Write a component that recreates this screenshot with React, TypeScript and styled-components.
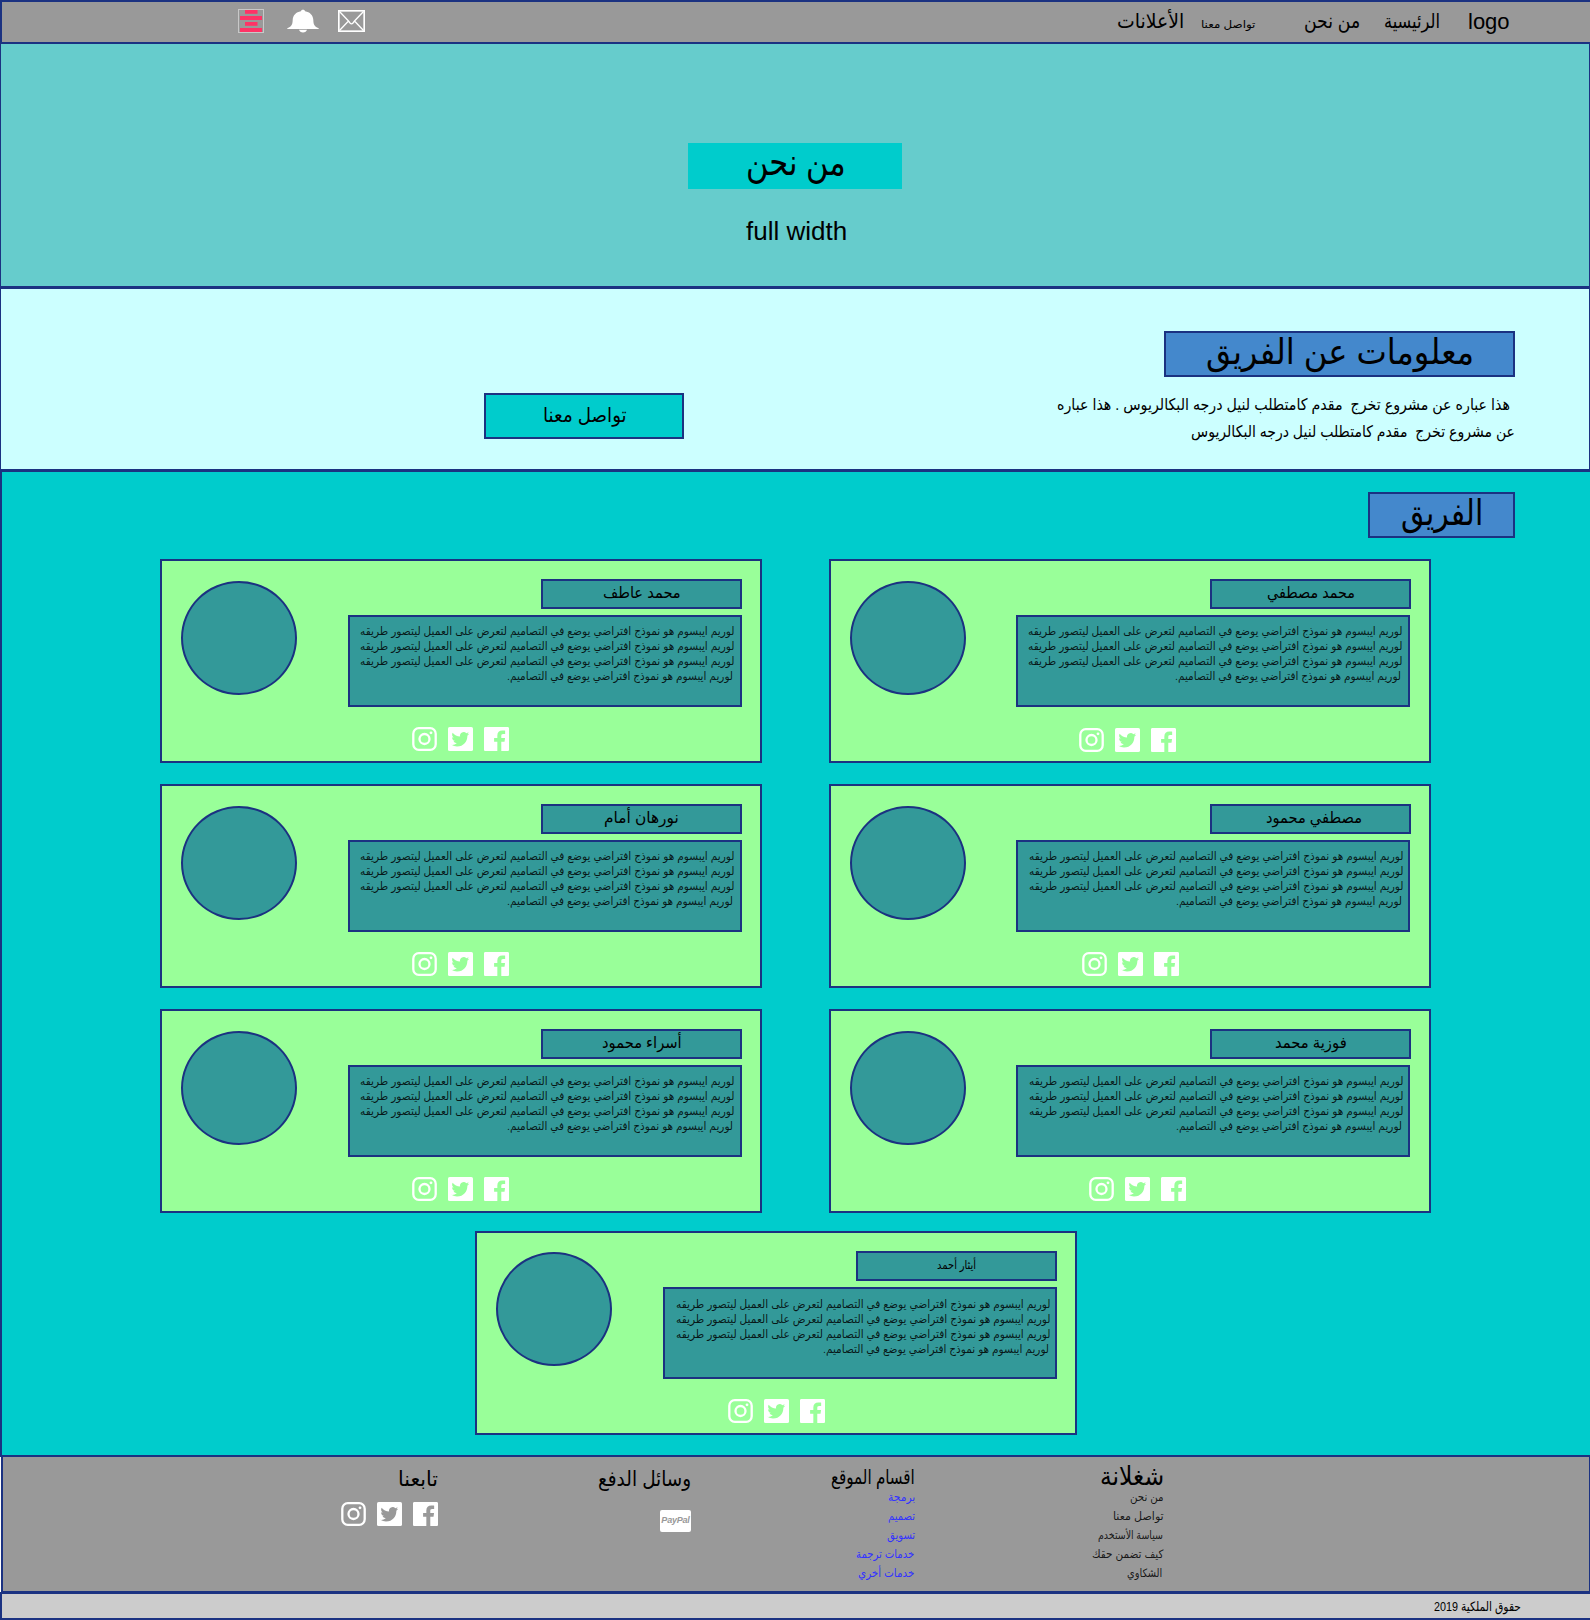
import React, { useLayoutEffect, useRef, useState } from "react";
import styled, { createGlobalStyle } from "styled-components";

const c = {
  line: "#1b3281",
  gray: "#999999",
  hero: "#66cccc",
  pale: "#ccffff",
  aqua: "#00cccc",
  green: "#99ff99",
  teal: "#339999",
  blue: "#4488cc",
  link: "#3333ff",
  soft: "rgba(0, 0, 0, 0.85)",
};

const GlobalStyle = createGlobalStyle`
  * { box-sizing: border-box; }
  body {
    margin: 0;
    font-family: "Liberation Sans", "DejaVu Sans", sans-serif;
    color: #000;
  }
`;

/* ---------- text fitted to a column width ---------- */

interface LineProps {
  $w: number;
  $fs: number;
  $lh: number;
  $base?: number;
  $ml?: number;
  $color?: string;
}

/* $base is the distance from the top of the slot down to the baseline */
const Line = styled.div<LineProps>`
  flex: none;
  width: ${(p) => p.$w}px;
  height: ${(p) => p.$lh}px;
  line-height: ${(p) => p.$lh}px;
  font-size: ${(p) => p.$fs}px;
  margin-left: ${(p) => p.$ml ?? 0}px;
  margin-top: ${(p) => (p.$base === undefined ? 0 : p.$base - p.$lh / 2 - p.$fs * 0.346)}px;
  color: ${(p) => p.$color ?? "#000"};
  white-space: pre;
`;

const Stretch = styled.span`
  display: inline-block;
  transform-origin: 0 50%;
  vertical-align: top;
`;

interface FitProps {
  w: number;
  fs: number;
  lh?: number;
  base?: number;
  ml?: number;
  color?: string;
  children: string;
}

function Fit({ w, fs, lh, base, ml, color, children }: FitProps) {
  const ref = useRef<HTMLSpanElement>(null);
  const [scale, setScale] = useState(1);
  useLayoutEffect(() => {
    if (ref.current) setScale(w / ref.current.offsetWidth);
  }, [w, fs, children]);
  return (
    <Line $w={w} $fs={fs} $lh={lh ?? Math.round(fs * 1.2)} $base={base} $ml={ml} $color={color}>
      <Stretch ref={ref} style={{ transform: `scaleX(${scale})` }}>
        <bdi dir="auto">{children}</bdi>
      </Stretch>
    </Line>
  );
}

/* ---------- icons ---------- */

const Icon = styled.svg<{ $ml?: number; $mt?: number }>`
  display: block;
  flex: none;
  margin-left: ${(p) => p.$ml ?? 0}px;
  margin-top: ${(p) => p.$mt ?? 0}px;
`;

const SocialRow = styled.div<{ $x: number; $y: number }>`
  display: flex;
  gap: 11px;
  margin-left: ${(p) => p.$x}px;
  margin-top: ${(p) => p.$y}px;
`;

function Socials({ x, y, bg }: { x: number; y: number; bg: string }) {
  return (
    <SocialRow $x={x} $y={y}>
      <Icon width="25" height="24" viewBox="0 0 25 24" fill="none" stroke="#fff">
        <rect x="1.3" y="1.2" width="22.4" height="21.6" rx="5.5" strokeWidth="2.3" />
        <circle cx="12.5" cy="12" r="5" strokeWidth="2.3" />
        <circle cx="19" cy="5.8" r="1.4" fill="#fff" stroke="none" />
      </Icon>
      <Icon width="25" height="24" viewBox="0 0 25 24">
        <rect width="25" height="24" rx="1.6" fill="#fff" />
        <path
          transform="translate(3.4 3.4) scale(.74)"
          fill={bg}
          d="M23.953 4.57a10 10 0 01-2.825.775 4.958 4.958 0 002.163-2.723c-.951.555-2.005.959-3.127 1.184a4.92 4.92 0 00-8.384 4.482C7.69 8.095 4.067 6.13 1.64 3.162a4.822 4.822 0 00-.666 2.475c0 1.71.87 3.213 2.188 4.096a4.904 4.904 0 01-2.228-.616v.06a4.923 4.923 0 003.946 4.827 4.996 4.996 0 01-2.212.085 4.936 4.936 0 004.604 3.417 9.867 9.867 0 01-6.102 2.105c-.39 0-.779-.023-1.17-.067a13.995 13.995 0 007.557 2.209c9.053 0 13.998-7.496 13.998-13.985 0-.21 0-.42-.015-.63A9.935 9.935 0 0024 4.59z"
        />
      </Icon>
      <Icon width="25" height="24" viewBox="0 0 24 24" preserveAspectRatio="none">
        <path
          fill="#fff"
          d="M22.7 0H1.3C.6 0 0 .6 0 1.3v21.4c0 .7.6 1.3 1.3 1.3h11.5v-9.3H9.7v-3.6h3.1V8.4c0-3.1 1.9-4.8 4.7-4.8 1.3 0 2.5.1 2.8.1v3.3h-1.9c-1.5 0-1.8.7-1.8 1.8v2.3h3.6l-.5 3.6h-3.1V24h6.1c.7 0 1.3-.6 1.3-1.3V1.3C24 .6 23.4 0 22.7 0z"
        />
      </Icon>
    </SocialRow>
  );
}

/* ---------- page sections ---------- */

const Page = styled.main`
  width: 1590px;
  height: 1620px;
  overflow: hidden;
  display: flex;
  flex-direction: column;
`;

const Header = styled.header`
  flex: none;
  display: flex;
  align-items: flex-start;
  height: 44px;
  background: ${c.gray};
  border: solid ${c.line};
  border-width: 2px 0 2px 2px;
`;

const Hero = styled.section`
  flex: none;
  height: 245px;
  display: flex;
  flex-direction: column;
  align-items: center;
  background: ${c.hero};
  border: solid ${c.line};
  border-width: 0 1px 3px 1px;
`;

const HeroButton = styled.div`
  width: 214px;
  height: 46px;
  margin-top: 99px;
  display: flex;
  background: ${c.aqua};
`;

const Info = styled.section`
  flex: none;
  height: 183px;
  display: flex;
  align-items: flex-start;
  background: ${c.pale};
  border: solid ${c.line};
  border-width: 0 1px 3px 1px;
`;

const ContactButton = styled.div`
  width: 200px;
  height: 46px;
  margin: 104px 0 0 483px;
  display: flex;
  background: ${c.aqua};
  border: 2px solid ${c.line};
`;

const InfoText = styled.div`
  width: 458px;
  margin: 42px 0 0 373px;
  display: flex;
  flex-direction: column;
`;

const TitleBox = styled.h2<{ $w: number }>`
  margin: 0;
  align-self: flex-end;
  flex: none;
  width: ${(p) => p.$w}px;
  height: 46px;
  display: flex;
  font-weight: normal;
  background: ${c.blue};
  border: 2px solid ${c.line};
`;

const Team = styled.section`
  flex: none;
  height: 985px;
  display: flex;
  flex-direction: column;
  padding: 20px 75px 0 158px;
  background: ${c.aqua};
  border: solid ${c.line};
  border-width: 0 0 2px 2px;
`;

const Grid = styled.div`
  display: grid;
  grid-template-columns: 602px 602px;
  column-gap: 67px;
  row-gap: 21px;
  margin-top: 21px;
`;

const LastRow = styled.div`
  margin: 18px 0 0 315px;
`;

const Card = styled.article`
  width: 602px;
  height: 204px;
  background: ${c.green};
  border: 2px solid ${c.line};
`;

const CardTop = styled.div`
  display: flex;
  align-items: flex-start;
  justify-content: space-between;
  height: 146px;
  padding: 18px 18px 0 19px;
`;

const Avatar = styled.div<{ $dy: number }>`
  width: 116px;
  height: 114px;
  margin-top: ${(p) => p.$dy}px;
  border-radius: 50%;
  background: ${c.teal};
  border: 2px solid ${c.line};
`;

const Details = styled.div`
  display: flex;
  flex-direction: column;
  align-items: flex-end;
  gap: 6px;
`;

const NameBox = styled.h3<{ $shift: number }>`
  margin: 0;
  width: 201px;
  height: 30px;
  display: flex;
  justify-content: center;
  padding-left: ${(p) => p.$shift}px;
  font-weight: normal;
  background: ${c.teal};
  border: 2px solid ${c.line};
`;

const Bio = styled.div<{ $right: boolean; $dx: number; $dy: number }>`
  width: 394px;
  height: 92px;
  margin-right: ${(p) => (p.$right ? 1 : 0)}px;
  padding: ${(p) => 7 + p.$dy}px 0 0 ${(p) => 10 + p.$dx}px;
  background: ${c.teal};
  border: 2px solid ${c.line};
`;

const Footer = styled.footer`
  flex: none;
  height: 135px;
  display: flex;
  align-items: flex-start;
  margin-left: 1px;
  background: ${c.gray};
  border: solid ${c.line};
  border-width: 0 1px 1px 2px;
`;

const Column = styled.div<{ $w: number; $ml: number }>`
  flex: none;
  width: ${(p) => p.$w}px;
  margin-left: ${(p) => p.$ml}px;
  display: flex;
  flex-direction: column;
  align-items: flex-end;
`;

const LinkList = styled.div<{ $mt: number }>`
  margin-top: ${(p) => p.$mt}px;
`;

const LinkItem = styled.div<{ $inset: number }>`
  display: flex;
  justify-content: flex-end;
  height: 19px;
  padding-right: ${(p) => p.$inset}px;
`;

const PayPal = styled.div`
  width: 31px;
  height: 22px;
  margin-top: 19px;
  border-radius: 2px;
  background: #fff;
  color: ${c.gray};
  font: italic bold 9px/21px "Liberation Sans", Arial, sans-serif;
  letter-spacing: -0.2px;
  text-align: center;
`;

const Copyright = styled.div`
  flex: none;
  height: 28px;
  display: flex;
  background: #cccccc;
  border: solid ${c.line};
  border-width: 2px 0 2px 2px;
`;

/* ---------- data ---------- */

const LOREM = "لوريم ايبسوم هو نموذج افتراضي يوضع في التصاميم لتعرض على العميل ليتصور طريقه";
const LOREM_END = "لوريم ايبسوم هو نموذج افتراضي يوضع في التصاميم.";

interface Member {
  name: string;
  w: number;
  fs: number;
  right?: boolean;
  shift?: number;
  dx?: number;
  sx: number;
  sy: number;
  last?: boolean;
}

const members: Member[] = [
  { name: "محمد عاطف", w: 78, fs: 16, sx: 250, sy: 20 },
  { name: "محمد مصطفي", w: 88, fs: 16, right: true, sx: 248, sy: 21 },
  { name: "نورهان أمام", w: 75, fs: 16, sx: 250, sy: 20 },
  { name: "مصطفي محمود", w: 96, fs: 16, right: true, shift: 6, dx: 1, sx: 251, sy: 20 },
  { name: "أسراء محمود", w: 80, fs: 16, shift: 1, sx: 250, sy: 20 },
  { name: "فوزية محمد", w: 72, fs: 16, right: true, shift: 1, dx: 1, sx: 258, sy: 20 },
];

const lastMember: Member = { name: "أيثار أحمد", w: 39, fs: 12, dx: 1, sx: 251, sy: 20, last: true };

function MemberCard({ m }: { m: Member }) {
  return (
    <Card>
      <CardTop>
        <Avatar $dy={m.last ? 1 : 2} />
        <Details>
          <NameBox $shift={m.shift ?? 0}>
            <Fit w={m.w} fs={m.fs} base={m.last ? 16 : 17}>{m.name}</Fit>
          </NameBox>
          <Bio $right={!!m.right} $dx={m.dx ?? 0} $dy={m.last ? 1 : 0}>
            <Fit w={375} fs={11.5} lh={15} color={c.soft}>{LOREM}</Fit>
            <Fit w={375} fs={11.5} lh={15} color={c.soft}>{LOREM}</Fit>
            <Fit w={375} fs={11.5} lh={15} color={c.soft}>{LOREM}</Fit>
            <Fit w={226} fs={11.5} lh={15} ml={147} color={c.soft}>{LOREM_END}</Fit>
          </Bio>
        </Details>
      </CardTop>
      <Socials x={m.sx} y={m.sy} bg={c.green} />
    </Card>
  );
}

const about = [
  { t: "من نحن", w: 34, inset: 0 },
  { t: "تواصل معنا", w: 51, inset: 0 },
  { t: "سياسة الأستخدم", w: 65, inset: 1 },
  { t: "كيف تضمن حقك", w: 71, inset: 1 },
  { t: "الشكاوي", w: 35, inset: 2 },
];

const sections = [
  { t: "برمجة", w: 27, inset: 0 },
  { t: "تصميم", w: 27, inset: 0 },
  { t: "تسويق", w: 28, inset: 0 },
  { t: "خدمات ترجمة", w: 58, inset: 1 },
  { t: "خدمات أخري", w: 56, inset: 1 },
];

export default function App() {
  return (
    <>
      <GlobalStyle />
      <Page>
        <Header>
          <Icon $ml={236} $mt={7} width="26" height="24" viewBox="0 0 26 24">
            <rect x=".5" y=".5" width="25" height="23" fill="none" stroke="#c8c8c8" />
            <g fill="#ff3366">
              <rect x="7" y="1" width="12.5" height="3.8" />
              <rect x="2" y="7" width="22" height="4" />
              <rect x="7" y="13" width="12.5" height="3.8" />
              <rect x="2" y="19" width="22" height="4" />
            </g>
          </Icon>
          <Icon $ml={23} $mt={7} width="32" height="24" viewBox="0 0 32 24" fill="#fff">
            <path d="M16 .7c1.2 0 2 .6 2.1 1.5 4.8.8 8 4 8.2 8.6.2 4.2.5 6.5 5.4 8.5v.6H.3v-.6c4.9-2 5.200-4.300 5.400-8.500C5.900 6.200 9.100 3 13.900 2.200 14 1.300 14.800.7 16 .7z" />
            <path d="M12 20.800h8c-.4 1.600-2 2.600-4 2.600s-3.600-1-4-2.600z" />
          </Icon>
          <Icon $ml={19} $mt={8} width="27" height="22" viewBox="0 0 27 22" fill="none" stroke="#fff">
            <rect x=".8" y=".8" width="25.400" height="20.400" strokeWidth="1.700" />
            <path d="M1.500 1.500l9 9.500 1.500 2q1.500 1.700 3 0l1.500-2 9-9.500M1.500 20.500l9-9.500M25.500 20.500l-9-9.500" strokeWidth="1.300" />
          </Icon>
          <Fit w={67} fs={20} base={26} ml={752}>الأعلانات</Fit>
          <Fit w={54} fs={11} base={26} ml={17}>تواصل معنا</Fit>
          <Fit w={56} fs={20} base={26} ml={49}>من نحن</Fit>
          <Fit w={56} fs={20} base={26} ml={24}>الرئيسية</Fit>
          <Fit w={42} fs={22} base={28} ml={28}>logo</Fit>
        </Header>

        <Hero>
          <HeroButton>
            <Fit w={100} fs={37} base={33} ml={58}>من نحن</Fit>
          </HeroButton>
          <Fit w={101} fs={26} base={51} ml={3}>full width</Fit>
        </Hero>

        <Info>
          <ContactButton>
            <Fit w={84} fs={20} base={27} ml={57}>تواصل معنا</Fit>
          </ContactButton>
          <InfoText>
            <TitleBox $w={351}>
              <Fit w={268} fs={35} base={31} ml={40}>معلومات عن الفريق</Fit>
            </TitleBox>
            <Fit w={453} fs={16} lh={27} base={33}>{"هذا عباره عن مشروع تخرج  مقدم كامتطلب لنيل درجه البكالريوس . هذا عباره"}</Fit>
            <Fit w={324} fs={16} lh={27} ml={134}>{"عن مشروع تخرج  مقدم كامتطلب لنيل درجه البكالريوس"}</Fit>
          </InfoText>
        </Info>

        <Team>
          <TitleBox $w={147}>
            <Fit w={82} fs={35} base={31} ml={31}>الفريق</Fit>
          </TitleBox>
          <Grid>
            {members.map((m) => (
              <MemberCard key={m.name} m={m} />
            ))}
          </Grid>
          <LastRow>
            <MemberCard m={lastMember} />
          </LastRow>
        </Team>

        <Footer>
          <Column $w={98} $ml={337}>
            <Fit w={40} fs={21} base={29}>تابعنا</Fit>
            <Socials x={0} y={11} bg={c.gray} />
          </Column>
          <Column $w={93} $ml={160}>
            <Fit w={93} fs={21} base={29}>وسائل الدفع</Fit>
            <PayPal>PayPal</PayPal>
          </Column>
          <Column $w={84} $ml={140}>
            <Fit w={84} fs={20} base={27}>اقسام الموقع</Fit>
            <LinkList $mt={-1}>
              {sections.map((s) => (
                <LinkItem key={s.t} $inset={s.inset}>
                  <Fit w={s.w} fs={11.5} lh={19} color={c.link}>{s.t}</Fit>
                </LinkItem>
              ))}
            </LinkList>
          </Column>
          <Column $w={84} $ml={165}>
            <Fit w={64} fs={26} base={28}>شغلانة</Fit>
            <LinkList $mt={-4}>
              {about.map((s) => (
                <LinkItem key={s.t} $inset={s.inset}>
                  <Fit w={s.w} fs={11.5} lh={19} color={c.soft}>{s.t}</Fit>
                </LinkItem>
              ))}
            </LinkList>
          </Column>
        </Footer>

        <Copyright>
          <Fit w={87} fs={13} base={17} ml={1432}>حقوق الملكية 2019</Fit>
        </Copyright>
      </Page>
    </>
  );
}
